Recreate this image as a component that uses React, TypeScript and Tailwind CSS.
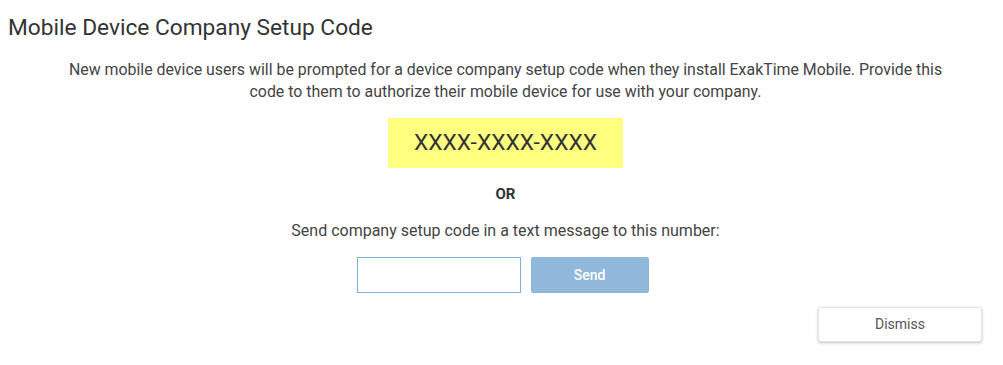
export default function App() {
  return (
    <div
      className="w-[1003px] h-[365px] bg-white text-[#333]"
      style={{ fontFamily: "Roboto, 'Liberation Sans', sans-serif" }}
    >
      <h1 className="pl-2 pt-[13px] text-[22.7px] leading-[30px] text-[#333] font-normal">
        Mobile Device Company Setup Code
      </h1>

      <div className="pl-2 flex flex-col items-center">
        <p className="mt-[16px] w-[900px] text-center text-[15.9px] leading-[22px] text-[#444]">
          New mobile device users will be prompted for a device company setup code when they install
          ExakTime Mobile. Provide this code to them to authorize their mobile device for use with your
          company.
        </p>

        <div className="mt-[15px] w-[235px] h-[50px] bg-[#ffff80] flex items-center justify-center text-[22.8px] text-[#333]">
          XXXX-XXXX-XXXX
        </div>

        <div className="mt-[16px] text-[15px] font-bold leading-[20px] text-[#333]">OR</div>

        <p className="mt-[17px] text-[16px] leading-[20px] text-[#444]">
          Send company setup code in a text message to this number:
        </p>

        <div className="mt-[16px] mr-[6px] flex items-center gap-[10px]">
          <input
            type="text"
            className="w-[164px] h-[36px] border border-[#7fb0d6] bg-white outline-none px-2"
          />
          <button className="w-[118px] h-[36px] rounded-[2px] bg-[#8fb8db] text-white text-[14px] font-medium">
            Send
          </button>
        </div>
      </div>

      <div className="flex justify-end pr-[21px] mt-[14px]">
        <button className="w-[164px] h-[35px] bg-white rounded-[2px] border border-[#e4e4e4] shadow-[0_1px_3px_rgba(0,0,0,0.25)] text-[14px] text-[#555]">
          Dismiss
        </button>
      </div>
    </div>
  );
}
